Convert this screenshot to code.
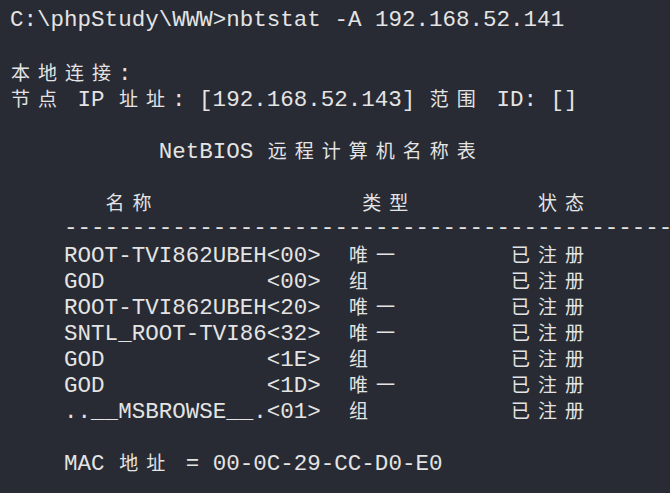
import React from 'react';

const lines: string[] = [
  'C:\\phpStudy\\WWW>nbtstat -A 192.168.52.141',
  '',
  '本地连接:',
  '节点 IP 址址: [192.168.52.143] 范围 ID: []',
  '',
  '           NetBIOS 远程计算机名称表',
  '',
  '       名称               类型         状态',
  '    ---------------------------------------------------------',
  '    ROOT-TVI862UBEH<00>  唯一        已注册',
  '    GOD            <00>  组          已注册',
  '    ROOT-TVI862UBEH<20>  唯一        已注册',
  '    SNTL_ROOT-TVI86<32>  唯一        已注册',
  '    GOD            <1E>  组          已注册',
  '    GOD            <1D>  唯一        已注册',
  '    ..__MSBROWSE__.<01>  组          已注册',
  '',
  '    MAC 地址 = 00-0C-29-CC-D0-E0',
];

function isWide(ch: string) {
  return ch.charCodeAt(0) > 0x2e80;
}

function Line({ text }: { text: string }) {
  if (!text) return <div className="h-[26px]" />;
  const parts = Array.from(text);
  return (
    <div className="h-[26px] leading-[26px] whitespace-pre">
      {parts.map((ch, i) =>
        isWide(ch) ? (
          <span
            key={i}
            className="inline-block w-[27px] text-left pl-[1px] text-[19px] font-['Noto_Sans_CJK_SC',sans-serif]"
          >
            {ch}
          </span>
        ) : (
          <span key={i}>{ch}</span>
        )
      )}
    </div>
  );
}

export default function App() {
  return (
    <div className="w-[670px] h-[493px] overflow-hidden bg-[#282b33] text-[#e4e4e4] pl-[10px] pt-[7px] text-[22.5px] font-['Liberation_Mono',monospace]">
      {lines.map((l, i) => (
        <Line key={i} text={l} />
      ))}
    </div>
  );
}
